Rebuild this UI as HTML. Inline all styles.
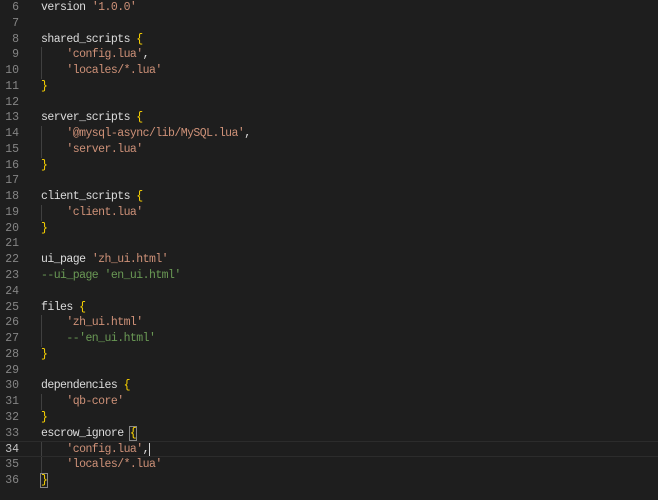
<!DOCTYPE html>
<html><head><style>
body{margin:0;background:#1e1e1e;width:658px;height:500px;overflow:hidden;font-family:"Liberation Mono",monospace;font-size:11.5px;}
.ed{position:absolute;top:0px;left:0;width:658px}
.l{height:15.77px;line-height:15.77px;white-space:pre;position:relative;color:#dcdcdc;letter-spacing:-0.55px}
.n{display:inline-block;width:19px;text-align:right;color:#858585;margin-right:22px;letter-spacing:0}
.s{color:#ce9178}.c{color:#6a9955}.b{color:#ffd700}
.g{position:absolute;left:41px;top:0;bottom:0;border-left:1px solid #404040}
.cur{border-top:1px solid #2c2c2c;border-bottom:1px solid #2c2c2c;box-sizing:border-box}
.cur .n{color:#c6c6c6}
.bx{outline:1px solid #888;}
.caret{display:inline-block;width:1px;height:13px;background:#d4d4d4;vertical-align:middle}
</style></head><body><div class="ed">
<div class="l"><span class="n">6</span>version <span class="s">'1.0.0'</span></div>
<div class="l"><span class="n">7</span></div>
<div class="l"><span class="n">8</span>shared_scripts <span class="b">{</span></div>
<div class="l"><span class="g"></span><span class="n">9</span>    <span class="s">'config.lua'</span>,</div>
<div class="l"><span class="g"></span><span class="n">10</span>    <span class="s">'locales/*.lua'</span></div>
<div class="l"><span class="n">11</span><span class="b">}</span></div>
<div class="l"><span class="n">12</span></div>
<div class="l"><span class="n">13</span>server_scripts <span class="b">{</span></div>
<div class="l"><span class="g"></span><span class="n">14</span>    <span class="s">'@mysql-async/lib/MySQL.lua'</span>,</div>
<div class="l"><span class="g"></span><span class="n">15</span>    <span class="s">'server.lua'</span></div>
<div class="l"><span class="n">16</span><span class="b">}</span></div>
<div class="l"><span class="n">17</span></div>
<div class="l"><span class="n">18</span>client_scripts <span class="b">{</span></div>
<div class="l"><span class="g"></span><span class="n">19</span>    <span class="s">'client.lua'</span></div>
<div class="l"><span class="n">20</span><span class="b">}</span></div>
<div class="l"><span class="n">21</span></div>
<div class="l"><span class="n">22</span>ui_page <span class="s">'zh_ui.html'</span></div>
<div class="l"><span class="n">23</span><span class="c">--ui_page 'en_ui.html'</span></div>
<div class="l"><span class="n">24</span></div>
<div class="l"><span class="n">25</span>files <span class="b">{</span></div>
<div class="l"><span class="g"></span><span class="n">26</span>    <span class="s">'zh_ui.html'</span></div>
<div class="l"><span class="g"></span><span class="n">27</span>    <span class="c">--'en_ui.html'</span></div>
<div class="l"><span class="n">28</span><span class="b">}</span></div>
<div class="l"><span class="n">29</span></div>
<div class="l"><span class="n">30</span>dependencies <span class="b">{</span></div>
<div class="l"><span class="g"></span><span class="n">31</span>    <span class="s">'qb-core'</span></div>
<div class="l"><span class="n">32</span><span class="b">}</span></div>
<div class="l"><span class="n">33</span>escrow_ignore <span class="b bx">{</span></div>
<div class="l cur"><span class="g"></span><span class="n">34</span>    <span class="s">'config.lua'</span>,<span class="caret"></span></div>
<div class="l"><span class="g"></span><span class="n">35</span>    <span class="s">'locales/*.lua'</span></div>
<div class="l"><span class="n">36</span><span class="b bx">}</span></div>
</div></body></html>
